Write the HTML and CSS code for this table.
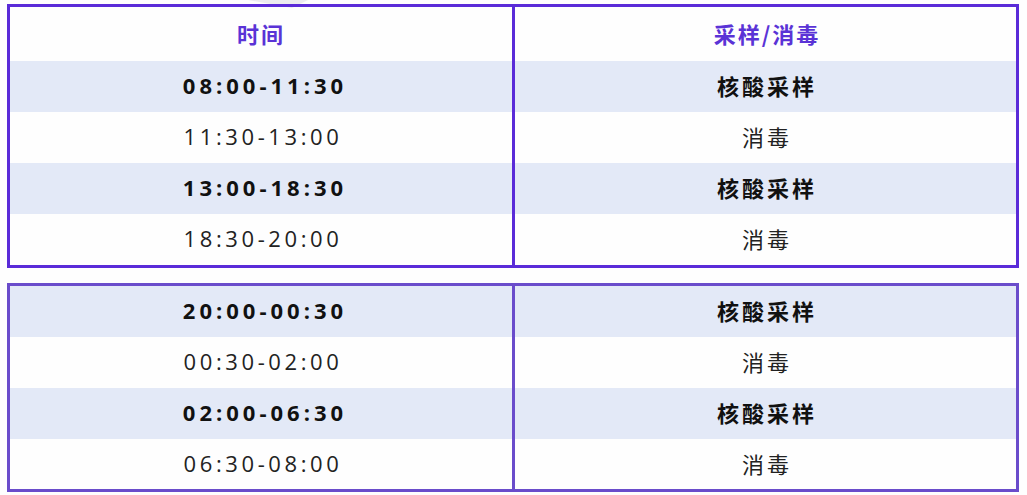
FILE: index.html
```html
<!DOCTYPE html>
<html lang="zh-CN">
<head>
<meta charset="utf-8">
<link rel="stylesheet" href="styles.css">
</head>
<body>
<div class="page">
  <svg class="deco" width="60" height="12" viewBox="0 0 60 12"><polygon points="0,0 60,0 44,8" fill="#ececef"/></svg>
  <div class="sheet sheet-a">
    <div class="row head">
      <div class="cell time">时间</div>
      <div class="cell">采样/消毒</div>
    </div>
    <div class="row alt strong">
      <div class="cell time num">08:00-11:30</div>
      <div class="cell">核酸采样</div>
    </div>
    <div class="row">
      <div class="cell time num">11:30-13:00</div>
      <div class="cell">消毒</div>
    </div>
    <div class="row alt strong">
      <div class="cell time num">13:00-18:30</div>
      <div class="cell">核酸采样</div>
    </div>
    <div class="row">
      <div class="cell time num">18:30-20:00</div>
      <div class="cell">消毒</div>
    </div>
  </div>
  <div class="sheet sheet-b">
    <div class="row alt strong">
      <div class="cell time num">20:00-00:30</div>
      <div class="cell">核酸采样</div>
    </div>
    <div class="row">
      <div class="cell time num">00:30-02:00</div>
      <div class="cell">消毒</div>
    </div>
    <div class="row alt strong">
      <div class="cell time num">02:00-06:30</div>
      <div class="cell">核酸采样</div>
    </div>
    <div class="row last">
      <div class="cell time num">06:30-08:00</div>
      <div class="cell">消毒</div>
    </div>
  </div>
</div>
</body>
</html>
```
FILE: styles.css
```css
html, body {
  margin: 0;
  padding: 0;
  background: #fefefe;
}
.page {
  position: relative;
  padding: 4px 0 0 7px;
  width: 1012px;
  font-family: "Open Sans", "Noto Sans CJK SC", sans-serif;
}
.deco {
  position: absolute;
  left: 248px;
  top: 0;
}
.sheet {
  position: relative;
  box-sizing: border-box;
  width: 1012px;
  border: 3px solid #5a2bd8;
}
.sheet-b {
  margin-top: 15px;
  border-color: #6a4ccb;
}
.row {
  display: grid;
  grid-template-columns: 505px 1fr;
  height: 51px;
}
.row.head {
  height: 54px;
}
.row.last {
  height: 50px;
}
.cell {
  display: flex;
  align-items: center;
  justify-content: center;
  box-sizing: border-box;
  padding-bottom: 3px;
  font-family: "Noto Sans CJK SC", sans-serif;
  font-size: 22px;
  letter-spacing: 3px;
  color: #222;
  padding-left: 3px;
}
.cell.time {
  border-right: 3px solid #5a2bd8;
  padding-left: 0;
}
.sheet-b .cell.time {
  border-right-color: #6a4ccb;
}
.cell.num {
  font-family: "Open Sans", sans-serif;
  font-size: 22px;
  padding-left: 4px;
  letter-spacing: 3.6px;
}
.strong .cell.num {
  padding-left: 8px;
  letter-spacing: 4px;
}
.head .cell {
  color: #5a33d6;
  font-weight: 700;
  letter-spacing: 2px;
}
.alt {
  background: #e3e9f7;
}
.strong .cell {
  font-weight: 700;
  color: #111;
}
```
